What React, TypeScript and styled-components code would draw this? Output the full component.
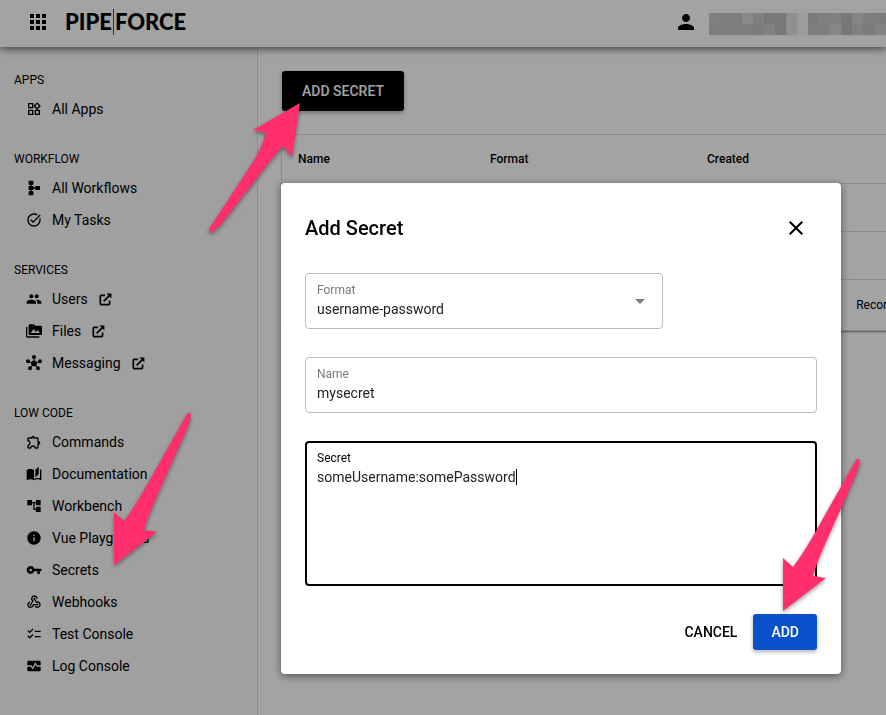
import React from "react";
import styled, { createGlobalStyle } from "styled-components";
import type { IconType } from "react-icons";
import {
  MdAccountTree,
  MdApps,
  MdArrowDropDown,
  MdChecklist,
  MdClose,
  MdHub,
  MdInfo,
  MdMonitorHeart,
  MdOutlineExtension,
  MdOutlineWidgets,
  MdPeople,
  MdPermMedia,
  MdPerson,
  MdSchema,
  MdTaskAlt,
  MdVpnKey,
  MdWebhook,
  MdAutoStories,
} from "react-icons/md";

const GlobalStyle = createGlobalStyle`
  *, *::before, *::after { box-sizing: border-box; }
  body {
    margin: 0;
    background: #fff;
    color: #000;
    font-family: Roboto, "Liberation Sans", sans-serif;
    font-size: 14px;
    overflow: hidden;
  }
  button, input, select, textarea { font: inherit; color: inherit; }
`;

const Page = styled.div`
  display: flex;
  flex-direction: column;
  height: 100vh;
  overflow: hidden;
`;

const Header = styled.header`
  display: flex;
  align-items: center;
  flex: none;
  height: 47px;
  padding: 0 0 3px 26px;
  background: #fff;
  box-shadow: 0 2px 8px rgba(0, 0, 0, 0.6);
  z-index: 1;
`;

const IconButton = styled.button`
  display: flex;
  padding: 0;
  border: 0;
  background: none;
  cursor: pointer;
`;

const Logo = styled.a`
  display: flex;
  align-items: center;
  margin-left: 15px;
  color: #000;
  font: 900 22px/26px Lato, sans-serif;
  text-decoration: none;
`;

const LogoBar = styled.span`
  width: 1px;
  height: 26px;
  margin: 0 1px;
  background: #555;
`;

const Account = styled.div`
  display: flex;
  align-items: center;
  gap: 11px;
  margin-left: auto;
`;

const Body = styled.div`
  display: flex;
  flex: 1;
  min-height: 0;
`;

const Sidebar = styled.nav`
  display: flex;
  flex-direction: column;
  gap: 26px;
  flex: none;
  width: 258px;
  padding: 25px 14px;
  border-right: 1px solid #dcdcdc;
  background: #fafafa;
`;

const GroupTitle = styled.h2`
  margin: 0 0 5px;
  font-size: 12px;
  font-weight: 400;
  line-height: 16px;
`;

const NavItem = styled.a`
  display: flex;
  align-items: center;
  gap: 10px;
  height: 32px;
  padding-left: 12px;
  color: #000;
  text-decoration: none;
`;

const ExternalMark = styled.svg`
  margin-left: 1px;
`;

const Main = styled.main`
  flex: 1;
  min-width: 0;
  padding: 24px 0 24px 24px;
  overflow: hidden;
`;

const Button = styled.button<{ $tone: "dark" | "blue" | "plain" }>`
  height: ${(p) => (p.$tone === "dark" ? 40 : 36)}px;
  padding: 0 ${(p) => (p.$tone === "dark" ? 20 : p.$tone === "blue" ? 18 : 8)}px;
  border: 0;
  border-radius: 3px;
  background: ${(p) => ({ dark: "#000", blue: "#0b51cb", plain: "none" })[p.$tone]};
  color: ${(p) => (p.$tone === "plain" ? "#000" : "#fff")};
  box-shadow: ${(p) => (p.$tone === "plain" ? "none" : "0 2px 4px rgba(0, 0, 0, 0.3)")};
  font-weight: 500;
  cursor: pointer;
`;

const TableCard = styled.section`
  width: 840px;
  margin-top: 24px;
  border-radius: 4px;
  box-shadow: 0 0 0 1px #dcdcdc, 0 2px 2px rgba(0, 0, 0, 0.5);
`;

const Table = styled.table`
  width: 100%;
  border-collapse: collapse;
  table-layout: fixed;
  font-size: 12px;
`;

const Cell = styled.td`
  height: 48px;
  padding: 0 16px;
  border-bottom: 1px solid #dcdcdc;
`;

const HeadCell = styled(Cell).attrs({ as: "th", scope: "col" })<{ $width?: number }>`
  width: ${(p) => (p.$width ? `${p.$width}px` : "auto")};
  font-weight: 500;
  text-align: left;
`;

const TableFooter = styled.div`
  display: flex;
  align-items: center;
  justify-content: flex-end;
  height: 50px;
  padding-right: 222px;
  font-size: 12px;
`;

const Backdrop = styled.div`
  position: fixed;
  inset: 0;
  z-index: 2;
  padding: 183px 45px 0 281px;
  background: rgba(0, 0, 0, 0.36);
`;

const Dialog = styled.form`
  width: 100%;
  max-width: 560px;
  padding: 24px;
  border-radius: 4px;
  background: #fff;
  box-shadow: 0 2px 8px rgba(0, 0, 0, 0.5);
`;

const DialogHeader = styled.div`
  display: flex;
  align-items: center;
  justify-content: space-between;
  height: 42px;
  padding-right: 9px;
`;

const DialogTitle = styled.h1`
  margin: 0;
  font-size: 20px;
  font-weight: 500;
  line-height: 24px;
`;

const Fields = styled.div`
  display: flex;
  flex-direction: column;
  gap: 28px;
  margin-top: 24px;
`;

const Field = styled.div<{ $narrow?: boolean; $active?: boolean }>`
  display: flex;
  flex-direction: column;
  position: relative;
  width: ${(p) => (p.$narrow ? "70%" : "100%")};
  padding: ${(p) => (p.$active ? "7px 10px 8px" : "8px 11px")};
  border: ${(p) => (p.$active ? "2px solid #000" : "1px solid #bdbdbd")};
  border-radius: 4px;
  color: ${(p) => (p.$active ? "#000" : "#7a7a7a")};
`;

const Label = styled.label`
  font-size: 12px;
  line-height: 16px;
`;

const Input = styled.input`
  height: 22px;
  padding: 0;
  border: 0;
  outline: 0;
  background: none;
  color: #222;
`;

const Select = styled.select`
  height: 22px;
  padding: 0;
  border: 0;
  outline: 0;
  appearance: none;
  background: none;
  color: #222;
`;

const Textarea = styled.textarea`
  height: 110px;
  padding: 3px 0 0;
  border: 0;
  outline: 0;
  resize: none;
  background: none;
  color: #222;
  caret-color: transparent;
  line-height: 16px;
`;

const Caret = styled.span`
  position: absolute;
  top: 26px;
  left: 209px;
  width: 1px;
  height: 16px;
  background: #000;
`;

const DropMark = styled(MdArrowDropDown)`
  position: absolute;
  top: 15px;
  right: 10px;
  pointer-events: none;
`;

const Actions = styled.div`
  display: flex;
  justify-content: flex-end;
  gap: 8px;
  margin-top: 28px;
`;

const Arrow = styled.svg<{ $x: number; $y: number }>`
  position: fixed;
  left: ${(p) => p.$x}px;
  top: ${(p) => p.$y}px;
  z-index: 3;
  overflow: visible;
  pointer-events: none;
  fill: #ff2f6e;
  filter: drop-shadow(0 2px 2px rgba(0, 0, 0, 0.4));
`;

const OpenIcon = () => (
  <ExternalMark width="13" height="13" viewBox="0 0 14 14" fill="none" stroke="currentColor" strokeWidth="1.8" aria-hidden="true">
    <path d="M6.5 2.5H2.2q-.8 0-.8.8v8.4q0 .8.8.8h8.4q.8 0 .8-.8V8M5 9 11.5 2.5" />
    <path d="M8 .6h5.3v5.3Z" fill="currentColor" stroke="none" />
  </ExternalMark>
);

type Entry = { label: string; icon: IconType; external?: boolean };

const groups: { title: string; items: Entry[] }[] = [
  { title: "APPS", items: [{ label: "All Apps", icon: MdOutlineWidgets }] },
  {
    title: "WORKFLOW",
    items: [
      { label: "All Workflows", icon: MdSchema },
      { label: "My Tasks", icon: MdTaskAlt },
    ],
  },
  {
    title: "SERVICES",
    items: [
      { label: "Users", icon: MdPeople, external: true },
      { label: "Files", icon: MdPermMedia, external: true },
      { label: "Messaging", icon: MdHub, external: true },
    ],
  },
  {
    title: "LOW CODE",
    items: [
      { label: "Commands", icon: MdOutlineExtension },
      { label: "Documentation", icon: MdAutoStories },
      { label: "Workbench", icon: MdAccountTree },
      { label: "Vue Playground", icon: MdInfo },
      { label: "Secrets", icon: MdVpnKey },
      { label: "Webhooks", icon: MdWebhook },
      { label: "Test Console", icon: MdChecklist },
      { label: "Log Console", icon: MdMonitorHeart },
    ],
  },
];

const mosaic = [
  ["#c8c8c8", "#c6c6c6", "#c6c6c6", "#d6d6d6", "#c8c8c8", "#bcbcbc", "#bcbcbc", "#e0e0e0", "#f4f4f4", "#c0c0c0", "#c8c8c8", "#cacaca", "#bcbcbc", "#d0d0d0", "#c6c6c6", "#c2c2c2"],
  ["#c4c4c4", "#c4c4c4", "#c4c4c4", "#c4c4c4", "#c2c2c2", "#cacaca", "#bcbcbc", "#e0e0e0", "#f4f4f4", "#c6c6c6", "#c6c6c6", "#d2d2d2", "#bcbcbc", "#c8c8c8", "#c0c0c0", "#cecece"],
];

const HiddenName = () => (
  <svg width="177" height="30" shapeRendering="crispEdges" aria-hidden="true">
    <rect width="177" height="30" fill="#f9f9f9" />
    <rect width="177" height="6" y="0" fill="#fff" fillOpacity="0.8" />
    {mosaic.map((row, r) =>
      row.map((fill, c) => <rect key={`${r}-${c}`} x={c * 11} y={6 + r * 11} width="12" height="11" fill={fill} />),
    )}
  </svg>
);

const downArrow = "M73 2 Q76-1 77 3 Q76 9 72 19 L43 84 Q34 104 30 118 L43 120 L0 153 L0 100 L10 109 Q19 97 29 80 Z";

export default function App() {
  return (
    <>
      <GlobalStyle />
      <Page>
        <Header>
          <IconButton aria-label="Apps">
            <MdApps size={24} />
          </IconButton>
          <Logo href="#">
            <span>PIPE</span>
            <LogoBar />
            <span>FORCE</span>
          </Logo>
          <Account>
            <IconButton aria-label="Account">
              <MdPerson size={24} />
            </IconButton>
            <HiddenName />
          </Account>
        </Header>
        <Body>
          <Sidebar>
            {groups.map((group) => (
              <div key={group.title}>
                <GroupTitle>{group.title}</GroupTitle>
                {group.items.map(({ label, icon: Icon, external }) => (
                  <NavItem href="#" key={label}>
                    <Icon size={16} />
                    <span>{label}</span>
                    {external && <OpenIcon />}
                  </NavItem>
                ))}
              </div>
            ))}
          </Sidebar>
          <Main>
            <Button $tone="dark">ADD SECRET</Button>
            <TableCard>
              <Table>
                <thead>
                  <tr>
                    <HeadCell $width={192}>Name</HeadCell>
                    <HeadCell $width={217}>Format</HeadCell>
                    <HeadCell>Created</HeadCell>
                  </tr>
                </thead>
                <tbody>
                  {[0, 1].map((row) => (
                    <tr key={row}>
                      <Cell />
                      <Cell />
                      <Cell />
                    </tr>
                  ))}
                </tbody>
              </Table>
              <TableFooter>Records</TableFooter>
            </TableCard>
          </Main>
        </Body>
      </Page>
      <Backdrop>
        <Dialog role="dialog" aria-labelledby="dialog-title" onSubmit={(e) => e.preventDefault()}>
          <DialogHeader>
            <DialogTitle id="dialog-title">Add Secret</DialogTitle>
            <IconButton type="button" aria-label="Close">
              <MdClose size={24} />
            </IconButton>
          </DialogHeader>
          <Fields>
            <Field $narrow>
              <Label htmlFor="format">Format</Label>
              <Select id="format" defaultValue="username-password">
                <option>username-password</option>
              </Select>
              <DropMark size={24} />
            </Field>
            <Field>
              <Label htmlFor="name">Name</Label>
              <Input id="name" defaultValue="mysecret" />
            </Field>
            <Field $active>
              <Label htmlFor="secret">Secret</Label>
              <Textarea id="secret" autoFocus spellCheck={false} defaultValue="someUsername:somePassword" />
              <Caret aria-hidden="true" />
            </Field>
          </Fields>
          <Actions>
            <Button type="button" $tone="plain">
              CANCEL
            </Button>
            <Button type="submit" $tone="blue">
              ADD
            </Button>
          </Actions>
        </Dialog>
      </Backdrop>
      <Arrow $x={208} $y={103} width="92" height="130" aria-hidden="true">
        <path d="M92 0 L84 54 L75 43 Q64 55 52 71 L14 120 Q8 127 4 129 Q0 130 1 126 L45 59 Q54 44 58 30 L45 27 Z" />
      </Arrow>
      <Arrow $x={114} $y={412} width="77" height="153" aria-hidden="true">
        <path d={downArrow} />
      </Arrow>
      <Arrow $x={783} $y={458} width="77" height="153" aria-hidden="true">
        <path d={downArrow} />
      </Arrow>
    </>
  );
}
